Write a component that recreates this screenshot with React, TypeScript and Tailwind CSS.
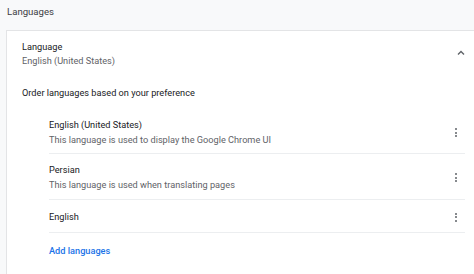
const font = { fontFamily: "Roboto, 'Noto Sans', sans-serif" };

const languages = [
  {
    name: "English (United States)",
    note: "This language is used to display the Google Chrome UI",
  },
  { name: "Persian", note: "This language is used when translating pages" },
  { name: "English", note: "" },
];

function Kebab() {
  return (
    <div className="flex w-[12px] flex-col items-center gap-[1.5px]">
      <span className="h-[2px] w-[2px] rounded-full bg-[#5f6368]" />
      <span className="h-[2px] w-[2px] rounded-full bg-[#5f6368]" />
      <span className="h-[2px] w-[2px] rounded-full bg-[#5f6368]" />
    </div>
  );
}

export default function App() {
  return (
    <div
      className="h-[274px] w-[474px] overflow-hidden bg-[#f8f9fa] text-[9.2px] text-[#202124]"
      style={font}
    >
      {/* Header */}
      <div className="h-[30px] pl-[7px] pt-[5px] leading-[14px] text-[9.6px] text-[#3c4043]">
        Languages
      </div>

      {/* Card */}
      <div className="ml-[6px] h-[244px] border-l border-t border-[#e3e4e6] bg-white">
        <div className="flex items-center justify-between pl-[15px] pr-[7px] pt-[9px]">
          <div className="leading-[14px]">
            <div>Language</div>
            <div className="text-[#5f6368]">English (United States)</div>
          </div>
          <svg width="12" height="12" viewBox="0 0 12 12" className="mt-[-2px]">
            <path
              d="M3 7.5 L6 4.5 L9 7.5"
              fill="none"
              stroke="#5f6368"
              strokeWidth="1.4"
            />
          </svg>
        </div>

        <div className="mt-[18px] pl-[15px] leading-[14px]">
          Order languages based on your preference
        </div>

        <div className="ml-[42px] mr-[9px] mt-[10px]">
          {languages.map((lang, i) => (
            <div
              key={i}
              className={`flex items-center justify-between border-b border-[#eceef0] pr-[3px] pt-[2px] ${
                lang.note ? (i === 0 ? "h-[44px]" : "h-[46px]") : "h-[33px]"
              }`}
            >
              <div className="leading-[14.5px]">
                <div>{lang.name}</div>
                {lang.note && <div className="text-[#5f6368]">{lang.note}</div>}
              </div>
              <Kebab />
            </div>
          ))}
          <div className="pt-[11px] font-medium leading-[14px] text-[#1a73e8]">
            Add languages
          </div>
        </div>
      </div>
    </div>
  );
}
